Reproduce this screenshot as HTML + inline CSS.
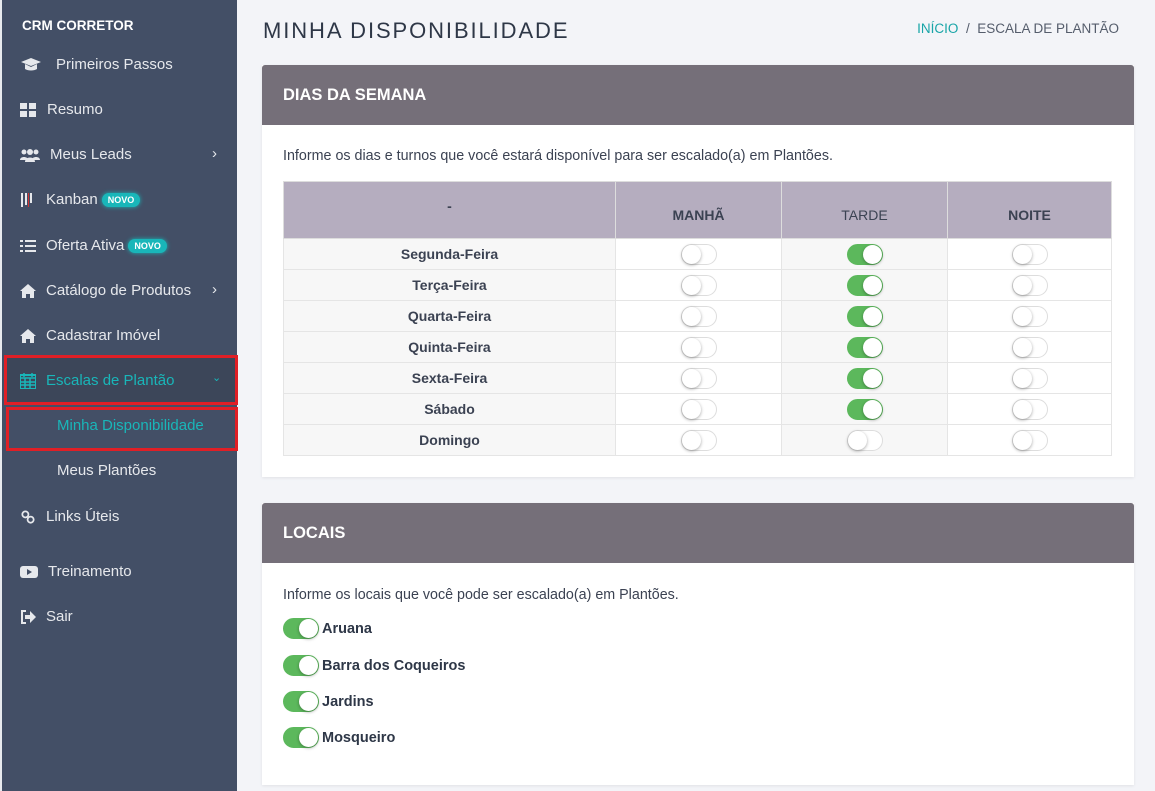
<!DOCTYPE html>
<html><head><meta charset="utf-8"><style>
*{box-sizing:border-box;margin:0;padding:0}
body{width:1155px;height:791px;overflow:hidden;background:#f3f4f8;font-family:"Liberation Sans",sans-serif;position:relative}
.sb{position:absolute;left:0;top:0;width:237px;height:791px;background:#434f66;border-left:2px solid #e8eaee}
.sb .t{position:absolute;left:20px;top:18px;color:#fff;font-size:13.5px;font-weight:bold}
.it{position:absolute;left:18px;color:#e6e8ec;font-size:15px;display:flex;align-items:center;gap:10px}
.ic{width:18px;height:14px;display:inline-block}
.chev{position:absolute;left:210px;color:#e6e8ec;font-size:15px}
.nv{background:#19b6b9;color:#fff;font-size:9px;font-weight:bold;border-radius:8px;padding:2px 6px;margin-left:-6px;box-shadow:0 0 4px #19b6b9}
.sel{position:absolute;left:2px;top:355px;width:234px;height:50px;background:#3c4659;border:3px solid #e01f26}
.sel2{position:absolute;left:4px;top:407px;width:232px;height:44px;border:3px solid #e01f26}
.main{position:absolute;left:237px;top:0;right:0;bottom:0}
h1{position:absolute;left:26px;top:18px;font-size:22px;font-weight:normal;color:#2e3747;letter-spacing:1.9px}
.bc{position:absolute;right:36px;top:21px;font-size:13.5px;color:#555d6c}
.bc span{color:#19a5a8}
.card{position:absolute;left:25px;width:872px;background:#fff;box-shadow:0 1px 3px rgba(0,0,0,.08)}
.ch{height:60px;background:#756f79;color:#fff;font-size:16.5px;font-weight:bold;padding:21px 21px;border-radius:3px 3px 0 0}
.txt{position:absolute;left:21px;font-size:14.3px;color:#3b4252}
table{position:absolute;left:21px;top:116px;width:829px;border-collapse:collapse;font-size:14px;color:#3b4252}
th{background:#b5adbf;height:57px;border:1px solid #ddd;font-weight:bold;padding-top:10px}
td{height:31px;border:1px solid #e5e5e5;text-align:center;font-weight:bold}
tr td:first-child{background:#f7f7f7}
tr td:nth-child(3){background:#f7f7f7}
.sw{display:inline-block;width:36px;height:21px;border-radius:11px;border:1px solid #ddd;background:#fff;position:relative;vertical-align:middle}
.sw::after{content:"";position:absolute;left:0;top:0;width:19px;height:19px;border-radius:50%;background:#fff;box-shadow:0 1px 3px rgba(0,0,0,.35)}
.sw.on{background:#5cb85c;border-color:#5cb85c}
.sw.on::after{left:15px}
.loc{position:absolute;left:21px;display:flex;align-items:center;gap:3px;font-size:14.5px;font-weight:bold;color:#2e3747}
</style></head><body>
<div class="sb">
<div class="t">CRM CORRETOR</div>
<div class="it" style="top:56px"><svg class="ic" viewBox="0 0 20 14" style="width:22px"><path d="M0 4L10 0 20 4 10 8Z M4 6v5c3 2 9 2 12 0V6l-6 3z" fill="#e6e8ec"/></svg><span style="margin-left:4px">Primeiros Passos</span></div>
<div class="it" style="top:101px"><svg class="ic" viewBox="0 0 16 14" style="width:16px"><rect x="0" y="0" width="7" height="6" fill="#e6e8ec"/><rect x="9" y="0" width="7" height="6" fill="#e6e8ec"/><rect x="0" y="8" width="7" height="6" fill="#e6e8ec"/><rect x="9" y="8" width="7" height="6" fill="#e6e8ec"/></svg><span style="margin-left:1px">Resumo</span></div>
<div class="it" style="top:146px"><svg class="ic" viewBox="0 0 20 14" style="width:20px"><circle cx="4" cy="4" r="2.5" fill="#e6e8ec"/><circle cx="16" cy="4" r="2.5" fill="#e6e8ec"/><circle cx="10" cy="4" r="3" fill="#e6e8ec"/><path d="M0 12c0-4 8-4 8 0zM12 12c0-4 8-4 8 0zM5 14c0-6 10-6 10 0z" fill="#e6e8ec"/></svg>Meus Leads</div><div class="chev" style="top:145px">›</div>
<div class="it" style="top:191px"><svg class="ic" viewBox="0 0 16 14" style="width:16px"><rect x="1" y="0" width="2" height="14" fill="#e6e8ec"/><rect x="5" y="0" width="2" height="12" fill="#e6e8ec"/><rect x="8" y="0" width="1" height="14" fill="#c33"/><rect x="10" y="0" width="2" height="10" fill="#e6e8ec"/></svg>Kanban <span class="nv">NOVO</span></div>
<div class="it" style="top:237px"><svg class="ic" viewBox="0 0 16 14" style="width:16px"><path d="M0 1h3v2H0zM5 1h11v2H5zM0 6h3v2H0zM5 6h11v2H5zM0 11h3v2H0zM5 11h11v2H5z" fill="#e6e8ec"/></svg>Oferta Ativa <span class="nv">NOVO</span></div>
<div class="it" style="top:282px"><svg class="ic" viewBox="0 0 16 14" style="width:16px"><path d="M8 0L0 7h2v7h4v-4h4v4h4V7h2z" fill="#e6e8ec"/></svg>Catálogo de Produtos</div><div class="chev" style="top:281px">›</div>
<div class="it" style="top:327px"><svg class="ic" viewBox="0 0 16 14" style="width:16px"><path d="M8 0L0 7h2v7h4v-4h4v4h4V7h2z" fill="#e6e8ec"/></svg>Cadastrar Imóvel</div>
<div class="sel"></div>
<div class="it" style="top:372px;color:#19b6b9"><svg class="ic" viewBox="0 0 16 16" style="width:16px;height:16px"><rect x="0" y="2" width="16" height="14" fill="none" stroke="#19b6b9" stroke-width="2"/><path d="M0 5h16M4 0v4M12 0v4M0 9h16M0 12h16M5 5v11M10 5v11" stroke="#19b6b9" stroke-width="1.5"/></svg>Escalas de Plantão</div><div class="chev" style="top:371px;color:#19b6b9;font-size:11px">⌄</div>
<div class="sel2"></div>
<div class="it" style="top:417px;left:55px;color:#19b6b9">Minha Disponibilidade</div>
<div class="it" style="top:462px;left:55px">Meus Plantões</div>
<div class="it" style="top:508px"><svg class="ic" viewBox="0 0 16 16" style="width:16px"><circle cx="5" cy="5" r="3.5" fill="none" stroke="#e6e8ec" stroke-width="2"/><circle cx="11" cy="11" r="3.5" fill="none" stroke="#e6e8ec" stroke-width="2"/></svg>Links Úteis</div>
<div class="it" style="top:563px"><svg class="ic" viewBox="0 0 18 14" style="width:18px"><rect x="0" y="1" width="18" height="12" rx="3" fill="#e6e8ec"/><path d="M7 4v6l5-3z" fill="#434f66"/></svg>Treinamento</div>
<div class="it" style="top:608px"><svg class="ic" viewBox="0 0 16 14" style="width:16px"><path d="M6 1H2v12h4" fill="none" stroke="#e6e8ec" stroke-width="2"/><path d="M5 5h5V1l6 6-6 6V9H5z" fill="#e6e8ec"/></svg>Sair</div>
</div>
<div class="main">
<h1>MINHA DISPONIBILIDADE</h1>
<div class="bc"><span>INÍCIO</span> &nbsp;/&nbsp; ESCALA DE PLANTÃO</div>
<div class="card" style="top:65px;height:412px">
<div class="ch">DIAS DA SEMANA</div>
<div class="txt" style="top:83px">Informe os dias e turnos que você estará disponível para ser escalado(a) em Plantões.</div>
<table>
<tr><th style="width:332px;padding-top:0;padding-bottom:8px">-</th><th style="width:166px">MANHÃ</th><th style="width:166px;font-weight:normal">TARDE</th><th>NOITE</th></tr>
<tr><td>Segunda-Feira</td><td><span class="sw"></span></td><td><span class="sw on"></span></td><td><span class="sw"></span></td></tr>
<tr><td>Terça-Feira</td><td><span class="sw"></span></td><td><span class="sw on"></span></td><td><span class="sw"></span></td></tr>
<tr><td>Quarta-Feira</td><td><span class="sw"></span></td><td><span class="sw on"></span></td><td><span class="sw"></span></td></tr>
<tr><td>Quinta-Feira</td><td><span class="sw"></span></td><td><span class="sw on"></span></td><td><span class="sw"></span></td></tr>
<tr><td>Sexta-Feira</td><td><span class="sw"></span></td><td><span class="sw on"></span></td><td><span class="sw"></span></td></tr>
<tr><td>Sábado</td><td><span class="sw"></span></td><td><span class="sw on"></span></td><td><span class="sw"></span></td></tr>
<tr><td>Domingo</td><td><span class="sw"></span></td><td><span class="sw"></span></td><td><span class="sw"></span></td></tr>
</table>
</div>
<div class="card" style="top:503px;height:282px">
<div class="ch">LOCAIS</div>
<div class="txt" style="top:84px">Informe os locais que você pode ser escalado(a) em Plantões.</div>
<div class="loc" style="top:115px"><span class="sw on"></span>Aruana</div>
<div class="loc" style="top:152px"><span class="sw on"></span>Barra dos Coqueiros</div>
<div class="loc" style="top:188px"><span class="sw on"></span>Jardins</div>
<div class="loc" style="top:224px"><span class="sw on"></span>Mosqueiro</div>
</div>
</div>
</body></html>
